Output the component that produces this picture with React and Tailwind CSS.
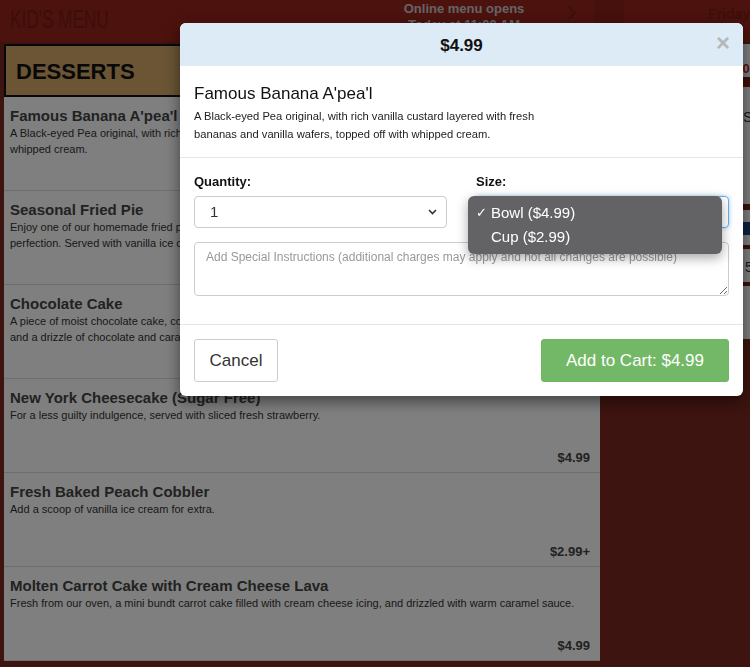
import { ChevronRight } from "lucide-react";

const desserts = [
  {
    name: "Famous Banana A'pea'l",
    desc: "A Black-eyed Pea original, with rich vanilla custard layered with fresh bananas and vanilla wafers, topped off with whipped cream.",
    price: "$2.99+",
  },
  {
    name: "Seasonal Fried Pie",
    desc: "Enjoy one of our homemade fried pies, filled with your choice of seasonal apple, cherry or peach filling, fried to perfection. Served with vanilla ice cream.",
    price: "$4.99",
  },
  {
    name: "Chocolate Cake",
    desc: "A piece of moist chocolate cake, covered with rich chocolate fudge icing and topped with a scoop of vanilla ice cream and a drizzle of chocolate and caramel sauce.",
    price: "$4.99",
  },
  {
    name: "New York Cheesecake (Sugar Free)",
    desc: "For a less guilty indulgence, served with sliced fresh strawberry.",
    price: "$4.99",
  },
  {
    name: "Fresh Baked Peach Cobbler",
    desc: "Add a scoop of vanilla ice cream for extra.",
    price: "$2.99+",
  },
  {
    name: "Molten Carrot Cake with Cream Cheese Lava",
    desc: "Fresh from our oven, a mini bundt carrot cake filled with cream cheese icing, and drizzled with warm caramel sauce.",
    price: "$4.99",
  },
];

function Chevron() {
  return (
    <svg width="9" height="6" viewBox="0 0 9 6" className="text-[#333]">
      <path d="M1 1l3.5 3.5L8 1" fill="none" stroke="currentColor" strokeWidth="1.6" />
    </svg>
  );
}

export default function App() {
  return (
    <div className="relative h-screen w-full overflow-hidden bg-[#7a281e] font-['Liberation_Sans',Arial,sans-serif]">
      {/* top bar */}
      <header className="flex h-[42px] bg-[#98241c]">
        <div className="w-[380px] pl-[10px] pt-[2px] text-[26px] leading-[34px] text-[#7a1b14]">
          <span className="inline-block origin-left scale-x-[0.66]">KID'S MENU</span>
        </div>
        <div className="w-[174px] pt-[1px] text-center text-[13px] font-bold leading-[16px] text-[#c8c8c8]">
          <div>Online menu opens</div>
          <div>Today at 11:00 AM</div>
        </div>
        <div className="flex w-[44px] items-start justify-center pt-[2px] text-[#7c1f17]">
          <ChevronRight size={22} />
        </div>
        <div className="w-[30px] bg-[#8c2018]" />
        <div className="flex-1 pl-[84px] pt-[4px] text-[14px] font-bold text-[#7c1d15]">Friday</div>
      </header>

      <div className="flex pt-[2px]">
        {/* menu list */}
        <section className="ml-[4px] w-[596px] shrink-0">
          <div className="h-[53px] border-2 border-[#111] bg-[#d6aa6a] px-[10px] pt-[13px] text-[22px] font-bold leading-[26px] text-[#111]">
            DESSERTS
          </div>
          {desserts.map((d) => (
            <div key={d.name} className="flex h-[94px] flex-col border-b border-[#dcdcdc] bg-white px-[6px] pt-[10px]">
              <h3 className="text-[15px] font-bold leading-[18px] text-[#444]">{d.name}</h3>
              <p className="text-[11px] leading-[16px] text-[#333]">{d.desc}</p>
              <div className="mt-auto pb-[5px] pr-[4px] text-right text-[13px] font-bold text-[#444]">{d.price}</div>
            </div>
          ))}
        </section>

        {/* cart panel */}
        <aside className="ml-[5px] flex h-[295px] flex-1 flex-col bg-white">
          <div className="h-[33px] pt-[15px] text-right text-[13px] font-bold text-[#c0281c]">$0.00</div>
          <div className="h-[10px] bg-[#7a1f17]" />
          <div className="h-[117px] pl-[138px] pt-[20px] text-[14px] text-[#333]">Sub</div>
          <div className="h-[6px] bg-[#7a1f17]" />
          <div className="h-[12px]" />
          <div className="ml-[138px] h-[13px] bg-[#1f3f8a]" />
          <div className="h-[10px]" />
          <div className="h-[4px] bg-[#7a1f17]" />
          <div className="h-[33px] pl-[140px] pt-[8px] text-[14px] text-[#333]">5</div>
          <div className="h-[4px] bg-[#7a1f17]" />
        </aside>
      </div>

      {/* overlay */}
      <div className="fixed inset-0 bg-black/50" />

      {/* modal */}
      <div className="fixed left-[180px] top-[23px] w-[563px] rounded-[6px] bg-white shadow-[0_5px_15px_rgba(0,0,0,0.5)]">
        <div className="relative flex h-[43px] items-center justify-center rounded-t-[6px] bg-[#dcebf6]">
          <span className="pt-[2px] text-[17px] font-bold text-[#111]">$4.99</span>
          <span className="absolute right-[13px] top-[8px] text-[24px] font-bold leading-[24px] text-[#b5b8ba]">×</span>
        </div>

        <div className="border-b border-[#e5e5e5] px-[14px] pb-[14px] pt-[18px]">
          <h2 className="text-[17px] font-medium leading-[20px] text-[#111]">Famous Banana A'pea'l</h2>
          <p className="mt-[3px] w-[360px] text-[11.2px] leading-[18px] text-[#222]">
            A Black-eyed Pea original, with rich vanilla custard layered with fresh bananas and vanilla wafers, topped off with whipped cream.
          </p>
        </div>

        <div className="border-b border-[#e5e5e5] px-[14px] pb-[28px] pt-[16px]">
          <div className="grid grid-cols-2 gap-x-[29px]">
            <div>
              <div className="mb-[6px] text-[13px] font-bold leading-[16px] text-[#111]">Quantity:</div>
              <div className="flex h-[32px] items-center justify-between rounded-[4px] border border-[#ccc] pl-[15px] pr-[9px] text-[15px] text-[#333]">
                <span>1</span>
                <Chevron />
              </div>
            </div>
            <div className="relative">
              <div className="mb-[6px] text-[13px] font-bold leading-[16px] text-[#111]">Size:</div>
              <div className="flex h-[32px] items-center justify-between rounded-[4px] border border-[#66afe9] pl-[12px] pr-[6px] text-[15px] text-[#333] shadow-[0_0_4px_rgba(102,175,233,0.6)]">
                <span>Bowl ($4.99)</span>
                <Chevron />
              </div>
              {/* open native dropdown */}
              <div className="absolute left-[-8px] top-[22px] z-10 w-[254px] rounded-[6px] bg-[#636366] py-[5px] text-[15px] leading-[24px] text-white shadow-[0_4px_12px_rgba(0,0,0,0.35)]">
                <div className="flex pl-[8px]">
                  <span className="w-[15px] text-[13px]">✓</span>
                  <span>Bowl ($4.99)</span>
                </div>
                <div className="pl-[23px]">Cup ($2.99)</div>
              </div>
            </div>
          </div>
          <textarea
            rows={2}
            placeholder="Add Special Instructions (additional charges may apply and not all changes are possible)"
            className="mt-[14px] block h-[54px] w-full rounded-[4px] border border-[#ccc] px-[11px] py-[5px] text-[12px] leading-[18px] text-[#333] placeholder:text-[#999] focus:outline-none"
          />
        </div>

        <div className="flex items-center justify-between p-[14px]">
          <button className="h-[43px] w-[84px] rounded-[3px] border border-[#ccc] bg-white text-[17px] text-[#333]">Cancel</button>
          <button className="h-[43px] w-[188px] rounded-[3px] border border-[#6fb662] bg-[#72b866] text-[17px] text-white">
            Add to Cart: $4.99
          </button>
        </div>
      </div>
    </div>
  );
}
